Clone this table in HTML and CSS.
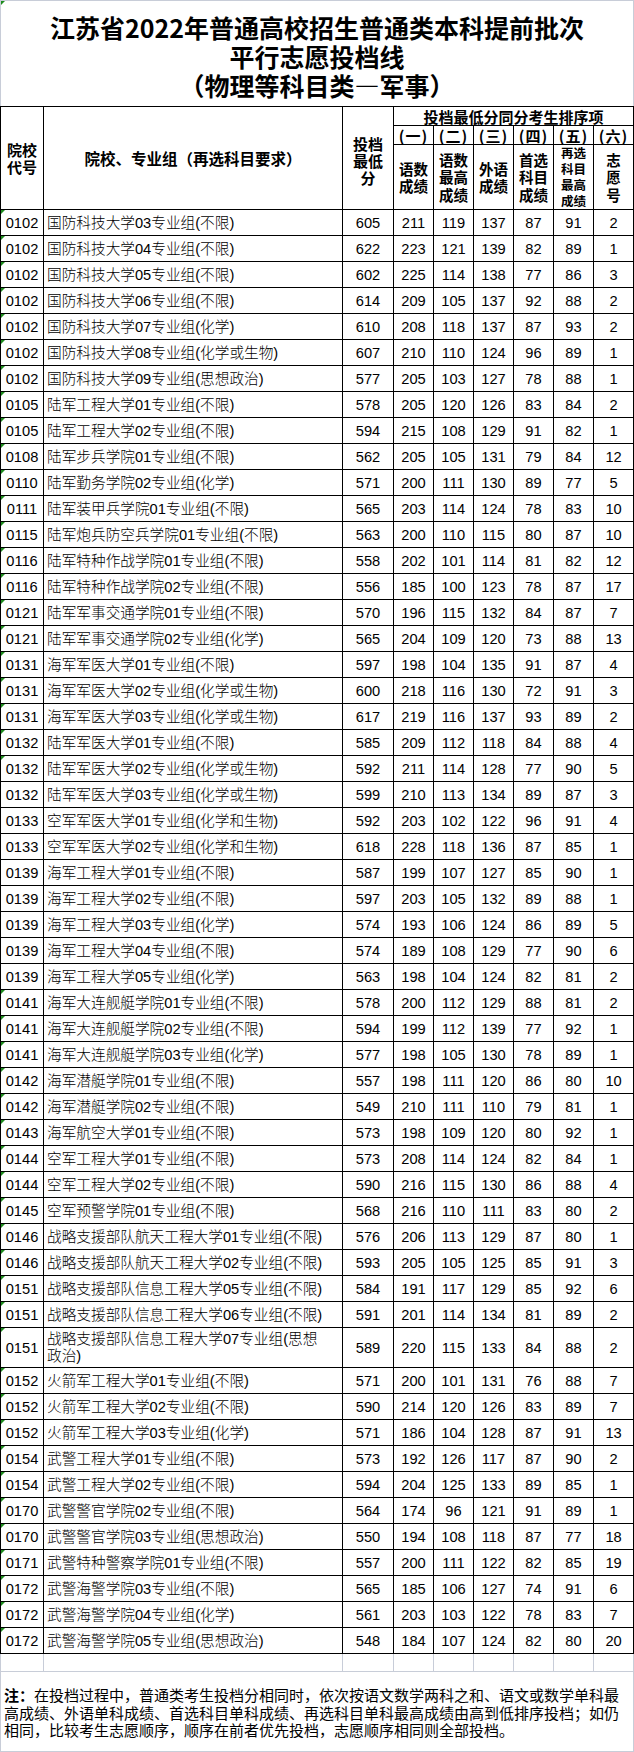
FILE: index.html
```html
<!DOCTYPE html>
<html lang="zh-CN">
<head>
<meta charset="utf-8">
<title>江苏省2022年普通高校招生普通类本科提前批次平行志愿投档线</title>
<link rel="stylesheet" href="styles.css">
</head>
<body>
<div class="sheet">
  <div class="title">
    <div class="tl">江苏省2022年普通高校招生普通类本科提前批次</div>
    <div class="tl">平行志愿投档线</div>
    <div class="tl">（物理等科目类—军事）</div>
  </div>
  <table class="grid">
    <colgroup>
      <col class="w-code"><col class="w-name"><col class="w-score">
      <col class="w-d"><col class="w-d"><col class="w-d"><col class="w-d"><col class="w-d"><col class="w-d">
    </colgroup>
    <thead>
      <tr class="h1">
        <th rowspan="3" class="hc">院校<br>代号</th>
        <th rowspan="3" class="hn">院校、专业组（再选科目要求）</th>
        <th rowspan="3" class="hs">投档<br>最低<br>分</th>
        <th colspan="6">投档最低分同分考生排序项</th>
      </tr>
      <tr class="h2"><th>(一)</th><th>(二)</th><th>(三)</th><th>(四)</th><th>(五)</th><th>(六)</th></tr>
      <tr class="h3"><th>语数<br>成绩</th><th>语数<br>最高<br>成绩</th><th>外语<br>成绩</th><th>首选<br>科目<br>成绩</th><th class="small">再选<br>科目<br>最高<br>成绩</th><th>志<br>愿<br>号</th></tr>
    </thead>
    <tbody>
      <tr class="mk"><td class="c">0102</td><td class="n">国防科技大学03专业组(不限)</td><td>605</td><td>211</td><td>119</td><td>137</td><td>87</td><td>91</td><td>2</td></tr>
      <tr class="mk"><td class="c">0102</td><td class="n">国防科技大学04专业组(不限)</td><td>622</td><td>223</td><td>121</td><td>139</td><td>82</td><td>89</td><td>1</td></tr>
      <tr class="mk"><td class="c">0102</td><td class="n">国防科技大学05专业组(不限)</td><td>602</td><td>225</td><td>114</td><td>138</td><td>77</td><td>86</td><td>3</td></tr>
      <tr class="mk"><td class="c">0102</td><td class="n">国防科技大学06专业组(不限)</td><td>614</td><td>209</td><td>105</td><td>137</td><td>92</td><td>88</td><td>2</td></tr>
      <tr class="mk"><td class="c">0102</td><td class="n">国防科技大学07专业组(化学)</td><td>610</td><td>208</td><td>118</td><td>137</td><td>87</td><td>93</td><td>2</td></tr>
      <tr class="mk"><td class="c">0102</td><td class="n">国防科技大学08专业组(化学或生物)</td><td>607</td><td>210</td><td>110</td><td>124</td><td>96</td><td>89</td><td>1</td></tr>
      <tr class="mk"><td class="c">0102</td><td class="n">国防科技大学09专业组(思想政治)</td><td>577</td><td>205</td><td>103</td><td>127</td><td>78</td><td>88</td><td>1</td></tr>
      <tr class="mk"><td class="c">0105</td><td class="n">陆军工程大学01专业组(不限)</td><td>578</td><td>205</td><td>120</td><td>126</td><td>83</td><td>84</td><td>2</td></tr>
      <tr class="mk"><td class="c">0105</td><td class="n">陆军工程大学02专业组(不限)</td><td>594</td><td>215</td><td>108</td><td>129</td><td>91</td><td>82</td><td>1</td></tr>
      <tr class="mk"><td class="c">0108</td><td class="n">陆军步兵学院01专业组(不限)</td><td>562</td><td>205</td><td>105</td><td>131</td><td>79</td><td>84</td><td>12</td></tr>
      <tr class="mk"><td class="c">0110</td><td class="n">陆军勤务学院02专业组(化学)</td><td>571</td><td>200</td><td>111</td><td>130</td><td>89</td><td>77</td><td>5</td></tr>
      <tr class="mk"><td class="c">0111</td><td class="n">陆军装甲兵学院01专业组(不限)</td><td>565</td><td>203</td><td>114</td><td>124</td><td>78</td><td>83</td><td>10</td></tr>
      <tr class="mk"><td class="c">0115</td><td class="n">陆军炮兵防空兵学院01专业组(不限)</td><td>563</td><td>200</td><td>110</td><td>115</td><td>80</td><td>87</td><td>10</td></tr>
      <tr class="mk"><td class="c">0116</td><td class="n">陆军特种作战学院01专业组(不限)</td><td>558</td><td>202</td><td>101</td><td>114</td><td>81</td><td>82</td><td>12</td></tr>
      <tr class="mk"><td class="c">0116</td><td class="n">陆军特种作战学院02专业组(不限)</td><td>556</td><td>185</td><td>100</td><td>123</td><td>78</td><td>87</td><td>17</td></tr>
      <tr class="mk"><td class="c">0121</td><td class="n">陆军军事交通学院01专业组(不限)</td><td>570</td><td>196</td><td>115</td><td>132</td><td>84</td><td>87</td><td>7</td></tr>
      <tr class="mk"><td class="c">0121</td><td class="n">陆军军事交通学院02专业组(化学)</td><td>565</td><td>204</td><td>109</td><td>120</td><td>73</td><td>88</td><td>13</td></tr>
      <tr class="mk"><td class="c">0131</td><td class="n">海军军医大学01专业组(不限)</td><td>597</td><td>198</td><td>104</td><td>135</td><td>91</td><td>87</td><td>4</td></tr>
      <tr class="mk"><td class="c">0131</td><td class="n">海军军医大学02专业组(化学或生物)</td><td>600</td><td>218</td><td>116</td><td>130</td><td>72</td><td>91</td><td>3</td></tr>
      <tr class="mk"><td class="c">0131</td><td class="n">海军军医大学03专业组(化学或生物)</td><td>617</td><td>219</td><td>116</td><td>137</td><td>93</td><td>89</td><td>2</td></tr>
      <tr class="mk"><td class="c">0132</td><td class="n">陆军军医大学01专业组(不限)</td><td>585</td><td>209</td><td>112</td><td>118</td><td>84</td><td>88</td><td>4</td></tr>
      <tr class="mk"><td class="c">0132</td><td class="n">陆军军医大学02专业组(化学或生物)</td><td>592</td><td>211</td><td>114</td><td>128</td><td>77</td><td>90</td><td>5</td></tr>
      <tr><td class="c">0132</td><td class="n">陆军军医大学03专业组(化学或生物)</td><td>599</td><td>210</td><td>113</td><td>134</td><td>89</td><td>87</td><td>3</td></tr>
      <tr><td class="c">0133</td><td class="n">空军军医大学01专业组(化学和生物)</td><td>592</td><td>203</td><td>102</td><td>122</td><td>96</td><td>91</td><td>4</td></tr>
      <tr><td class="c">0133</td><td class="n">空军军医大学02专业组(化学和生物)</td><td>618</td><td>228</td><td>118</td><td>136</td><td>87</td><td>85</td><td>1</td></tr>
      <tr><td class="c">0139</td><td class="n">海军工程大学01专业组(不限)</td><td>587</td><td>199</td><td>107</td><td>127</td><td>85</td><td>90</td><td>1</td></tr>
      <tr><td class="c">0139</td><td class="n">海军工程大学02专业组(不限)</td><td>597</td><td>203</td><td>105</td><td>132</td><td>89</td><td>88</td><td>1</td></tr>
      <tr><td class="c">0139</td><td class="n">海军工程大学03专业组(化学)</td><td>574</td><td>193</td><td>106</td><td>124</td><td>86</td><td>89</td><td>5</td></tr>
      <tr><td class="c">0139</td><td class="n">海军工程大学04专业组(不限)</td><td>574</td><td>189</td><td>108</td><td>129</td><td>77</td><td>90</td><td>6</td></tr>
      <tr><td class="c">0139</td><td class="n">海军工程大学05专业组(化学)</td><td>563</td><td>198</td><td>104</td><td>124</td><td>82</td><td>81</td><td>2</td></tr>
      <tr class="mk"><td class="c">0141</td><td class="n">海军大连舰艇学院01专业组(不限)</td><td>578</td><td>200</td><td>112</td><td>129</td><td>88</td><td>81</td><td>2</td></tr>
      <tr class="mk"><td class="c">0141</td><td class="n">海军大连舰艇学院02专业组(不限)</td><td>594</td><td>199</td><td>112</td><td>139</td><td>77</td><td>92</td><td>1</td></tr>
      <tr class="mk"><td class="c">0141</td><td class="n">海军大连舰艇学院03专业组(化学)</td><td>577</td><td>198</td><td>105</td><td>130</td><td>78</td><td>89</td><td>1</td></tr>
      <tr class="mk"><td class="c">0142</td><td class="n">海军潜艇学院01专业组(不限)</td><td>557</td><td>198</td><td>111</td><td>120</td><td>86</td><td>80</td><td>10</td></tr>
      <tr class="mk"><td class="c">0142</td><td class="n">海军潜艇学院02专业组(不限)</td><td>549</td><td>210</td><td>111</td><td>110</td><td>79</td><td>81</td><td>1</td></tr>
      <tr class="mk"><td class="c">0143</td><td class="n">海军航空大学01专业组(不限)</td><td>573</td><td>198</td><td>109</td><td>120</td><td>80</td><td>92</td><td>1</td></tr>
      <tr class="mk"><td class="c">0144</td><td class="n">空军工程大学01专业组(不限)</td><td>573</td><td>208</td><td>114</td><td>124</td><td>82</td><td>84</td><td>1</td></tr>
      <tr class="mk"><td class="c">0144</td><td class="n">空军工程大学02专业组(不限)</td><td>590</td><td>216</td><td>115</td><td>130</td><td>86</td><td>88</td><td>4</td></tr>
      <tr class="mk"><td class="c">0145</td><td class="n">空军预警学院01专业组(不限)</td><td>568</td><td>216</td><td>110</td><td>111</td><td>83</td><td>80</td><td>2</td></tr>
      <tr class="mk"><td class="c">0146</td><td class="n">战略支援部队航天工程大学01专业组(不限)</td><td>576</td><td>206</td><td>113</td><td>129</td><td>87</td><td>80</td><td>1</td></tr>
      <tr class="mk"><td class="c">0146</td><td class="n">战略支援部队航天工程大学02专业组(不限)</td><td>593</td><td>205</td><td>105</td><td>125</td><td>85</td><td>91</td><td>3</td></tr>
      <tr class="mk"><td class="c">0151</td><td class="n">战略支援部队信息工程大学05专业组(不限)</td><td>584</td><td>191</td><td>117</td><td>129</td><td>85</td><td>92</td><td>6</td></tr>
      <tr class="mk"><td class="c">0151</td><td class="n">战略支援部队信息工程大学06专业组(不限)</td><td>591</td><td>201</td><td>114</td><td>134</td><td>81</td><td>89</td><td>2</td></tr>
      <tr class="mk tall"><td class="c">0151</td><td class="n">战略支援部队信息工程大学07专业组(思想<br>政治)</td><td>589</td><td>220</td><td>115</td><td>133</td><td>84</td><td>88</td><td>2</td></tr>
      <tr class="mk"><td class="c">0152</td><td class="n">火箭军工程大学01专业组(不限)</td><td>571</td><td>200</td><td>101</td><td>131</td><td>76</td><td>88</td><td>7</td></tr>
      <tr class="mk"><td class="c">0152</td><td class="n">火箭军工程大学02专业组(不限)</td><td>590</td><td>214</td><td>120</td><td>126</td><td>83</td><td>89</td><td>7</td></tr>
      <tr class="mk"><td class="c">0152</td><td class="n">火箭军工程大学03专业组(化学)</td><td>571</td><td>186</td><td>104</td><td>128</td><td>87</td><td>91</td><td>13</td></tr>
      <tr class="mk"><td class="c">0154</td><td class="n">武警工程大学01专业组(不限)</td><td>573</td><td>192</td><td>126</td><td>117</td><td>87</td><td>90</td><td>2</td></tr>
      <tr class="mk"><td class="c">0154</td><td class="n">武警工程大学02专业组(不限)</td><td>594</td><td>204</td><td>125</td><td>133</td><td>89</td><td>85</td><td>1</td></tr>
      <tr class="mk"><td class="c">0170</td><td class="n">武警警官学院02专业组(不限)</td><td>564</td><td>174</td><td>96</td><td>121</td><td>91</td><td>89</td><td>1</td></tr>
      <tr class="mk"><td class="c">0170</td><td class="n">武警警官学院03专业组(思想政治)</td><td>550</td><td>194</td><td>108</td><td>118</td><td>87</td><td>77</td><td>18</td></tr>
      <tr class="mk"><td class="c">0171</td><td class="n">武警特种警察学院01专业组(不限)</td><td>557</td><td>200</td><td>111</td><td>122</td><td>82</td><td>85</td><td>19</td></tr>
      <tr class="mk"><td class="c">0172</td><td class="n">武警海警学院03专业组(不限)</td><td>565</td><td>185</td><td>106</td><td>127</td><td>74</td><td>91</td><td>6</td></tr>
      <tr class="mk"><td class="c">0172</td><td class="n">武警海警学院04专业组(化学)</td><td>561</td><td>203</td><td>103</td><td>122</td><td>78</td><td>83</td><td>7</td></tr>
      <tr class="mk"><td class="c">0172</td><td class="n">武警海警学院05专业组(思想政治)</td><td>548</td><td>184</td><td>107</td><td>124</td><td>82</td><td>80</td><td>20</td></tr>
      <tr class="blank"><td></td><td></td><td></td><td></td><td></td><td></td><td></td><td></td><td></td></tr>
    </tbody>
  </table>
  <div class="note"><b>注：</b>在投档过程中，普通类考生投档分相同时，依次按语文数学两科之和、语文或数学单科最高成绩、外语单科成绩、首选科目单科成绩、再选科目单科最高成绩由高到低排序投档；如仍相同，比较考生志愿顺序，顺序在前者优先投档，志愿顺序相同则全部投档。</div>
</div>
</body>
</html>
```
FILE: styles.css
```css
html, body {
  margin: 0;
  padding: 0;
  background: #fff;
}
body {
  font-family: "Liberation Sans", "Noto Sans CJK SC", sans-serif;
  color: #000;
}
.sheet {
  width: 634px;
}
.title {
  position: relative;
  height: 106px;
  box-sizing: border-box;
  border: 1px solid #c8cdd8;
  border-bottom: none;
  padding-top: 12px;
  text-align: center;
  font-family: "Noto Sans CJK SC", sans-serif;
  font-weight: 700;
  font-size: 25px;
}
.title .tl {
  height: 29px;
  line-height: 29px;
}
.title::before {
  content: "";
  position: absolute;
  left: 0;
  top: 0;
  border-top: 4px solid #1e8c1e;
  border-right: 4px solid transparent;
}
.grid {
  border-collapse: collapse;
  table-layout: fixed;
  width: 634px;
}
.w-code { width: 43px; }
.w-name { width: 299px; }
.w-score { width: 51px; }
.w-d { width: 40px; }
.grid th,
.grid td {
  border: 1px solid #000;
  padding: 0;
  text-align: center;
  vertical-align: middle;
  white-space: nowrap;
  overflow: hidden;
}
.grid th {
  font-family: "Noto Sans CJK SC", sans-serif;
  font-weight: 700;
  font-size: 15px;
  line-height: 17px;
}
.grid .h1 { height: 19px; }
.grid .h2 { height: 19px; }
.grid .h2 th { letter-spacing: 1px; }
.grid .h3 { height: 64px; }
.grid .h3 th {
  font-size: 14.5px;
  line-height: 17.5px;
}
.grid .h3 th.small {
  font-size: 12.5px;
  line-height: 16px;
}
.grid .hn { font-size: 15.5px; }
.grid .hs { padding-top: 4px; }
.grid td {
  font-size: 14.67px;
  font-weight: 300;
  line-height: 17px;
  padding-top: 1px;
}
.grid tbody tr { height: 26px; }
.grid tbody tr.tall { height: 40px; }
.grid td.n {
  text-align: left;
  padding-left: 3px;
  white-space: normal;
}
.grid td.c {
  position: relative;
}
.grid tr.mk td.c::before {
  content: "";
  position: absolute;
  left: 0;
  top: 0;
  border-top: 4px solid #1e8c1e;
  border-right: 4px solid transparent;
}
.grid tr.blank { height: 18px; }
.grid tr.blank td {
  border-color: #c8cdd8;
  border-top-color: #000;
}
.note {
  height: 80px;
  box-sizing: border-box;
  border: 1px solid #c8cdd8;
  border-top: none;
  padding: 14px 3px 0 3px;
  font-family: "Noto Sans CJK SC", sans-serif;
  font-size: 15px;
  line-height: 17.5px;
}
.note b { font-weight: 700; }
```
